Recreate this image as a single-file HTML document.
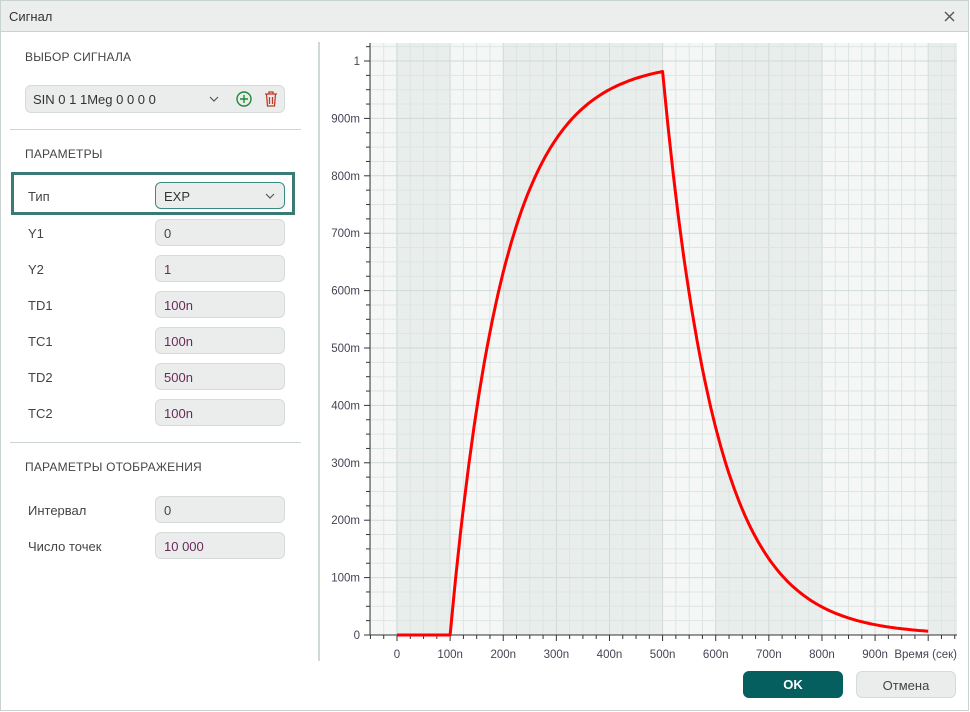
<!DOCTYPE html>
<html><head><meta charset="utf-8"><style>
*{box-sizing:border-box;margin:0;padding:0}
body{width:970px;height:712px;background:#fff;font-family:"Liberation Sans","DejaVu Sans",sans-serif;font-size:13px;color:#333;position:relative;overflow:hidden}
.win{position:absolute;left:0;top:0;width:969px;height:711px;border:1px solid #c8d2d0}
.title{position:absolute;left:1px;top:1px;width:967px;height:31px;background:#eceeed;border-bottom:1px solid #c8d2d0}
.title span{position:absolute;left:8px;top:8px;font-size:13px;color:#333}
.abs{position:absolute}
.h{position:absolute;left:25px;font-size:12px;color:#444;letter-spacing:.2px}
.lbl{position:absolute;left:28px;font-size:13px;color:#444}
.fld{position:absolute;left:155px;width:130px;height:27px;background:#ebedec;border:1px solid #d4dbd9;border-radius:6px;padding:6px 8px;font-size:13px;color:#6a2a5a}
.hr{position:absolute;left:10px;width:291px;height:1px;background:#cdd6d4}
.btn{position:absolute;top:671px;height:27px;width:100px;border-radius:6px;text-align:center;line-height:27px;font-size:13px}
</style></head><body>
<div class="win"></div>
<div class="title"><span>Сигнал</span>
<svg class="abs" style="left:943px;top:10px" width="12" height="12"><path d="M1 1L10 10M10 1L1 10" stroke="#555" stroke-width="1.4"/></svg></div>

<div class="h" style="top:50px">ВЫБОР СИГНАЛА</div>
<div class="abs" style="left:25px;top:85px;width:260px;height:28px;background:#ebedec;border:1px solid #d4dbd9;border-radius:6px"></div>
<div class="abs" style="left:33px;top:92px;font-size:13px;color:#333">SIN 0 1 1Meg 0 0 0 0</div>
<svg class="abs" style="left:209px;top:95px" width="10" height="8"><path d="M1 2L5 6L9 2" stroke="#555" fill="none" stroke-width="1.2"/></svg>
<svg class="abs" style="left:235px;top:90px" width="18" height="18"><circle cx="9" cy="9" r="7" stroke="#1f8a35" fill="none" stroke-width="1.4"/><path d="M9 5V13M5 9H13" stroke="#1f8a35" stroke-width="1.4"/></svg>
<svg class="abs" style="left:263px;top:90px" width="16" height="18"><path d="M2 4H14M6 4V2H10V4M3.5 4L4.5 16H11.5L12.5 4M6.5 7V14M9.5 7V14" stroke="#c0392b" fill="none" stroke-width="1.3"/></svg>
<div class="hr" style="top:129px"></div>
<div class="h" style="top:147px">ПАРАМЕТРЫ</div>
<div class="abs" style="left:11px;top:172px;width:284px;height:43px;border:3px solid #3a7a76"></div>
<div class="lbl" style="top:189px">Тип</div>
<div class="fld" style="top:182px;border-color:#3a8a84;color:#333;background:#ebedec">EXP</div>
<svg class="abs" style="left:265px;top:192px" width="10" height="8"><path d="M1 2L5 6L9 2" stroke="#555" fill="none" stroke-width="1.2"/></svg>
<div class="lbl" style="top:226px">Y1</div><div class="fld" style="top:219px;color:#444">0</div>
<div class="lbl" style="top:262px">Y2</div><div class="fld" style="top:255px">1</div>
<div class="lbl" style="top:298px">TD1</div><div class="fld" style="top:291px">100n</div>
<div class="lbl" style="top:334px">TC1</div><div class="fld" style="top:327px">100n</div>
<div class="lbl" style="top:370px">TD2</div><div class="fld" style="top:363px">500n</div>
<div class="lbl" style="top:406px">TC2</div><div class="fld" style="top:399px">100n</div>
<div class="hr" style="top:442px"></div>
<div class="h" style="top:460px">ПАРАМЕТРЫ ОТОБРАЖЕНИЯ</div>
<div class="lbl" style="top:503px">Интервал</div><div class="fld" style="top:496px;color:#444">0</div>
<div class="lbl" style="top:539px">Число точек</div><div class="fld" style="top:532px">10 000</div>
<div class="abs" style="left:318px;top:42px;width:2px;height:619px;background:#cfd9d7"></div>

<svg id="plot" class="abs" style="left:0;top:0" width="970" height="712"></svg>

<div class="btn" style="left:743px;background:#055f5f;color:#fff;font-weight:bold">OK</div>
<div class="btn" style="left:856px;background:#ebedec;border:1px solid #d4dbd9;color:#444">Отмена</div>
<script>
var s='',L=370,R=957,T=43,B=635;
function X(t){return 397+t*0.5312}function Y(v){return 635-v*574}
var bands=[[370,396,'#f5f7f6'],[396,450,'#e9eeed'],[450,503,'#f5f7f6'],[503,662,'#e9eeed'],[662,716,'#f5f7f6'],[716,822,'#e9eeed'],[822,929,'#f5f7f6'],[929,957,'#e9eeed']];
bands.forEach(function(b){s+='<rect x="'+b[0]+'" y="'+T+'" width="'+(b[1]-b[0])+'" height="'+(B-T)+'" fill="'+b[2]+'"/>';});
for(var t=-50;t<=1050;t+=25){var x=X(t);if(x<L||x>R)continue;var maj=(t%100==0);
s+='<line x1="'+x+'" y1="'+T+'" x2="'+x+'" y2="'+B+'" stroke="'+(maj?'#cfdad8':'#dde5e3')+'" stroke-width="1"/>';
s+='<line x1="'+x+'" y1="'+B+'" x2="'+x+'" y2="'+(B+(maj?6:4))+'" stroke="#333"/>';
if(maj&&t>=0&&t<=900)s+='<text x="'+x+'" y="658" text-anchor="middle" font-size="11.5" fill="#445">'+(t==0?'0':t+'n')+'</text>';}
for(var v=0;v<=1025;v+=25){var y=Y(v/1000);if(y<T)continue;var maj=(v%100==0);
s+='<line x1="'+L+'" y1="'+y+'" x2="'+R+'" y2="'+y+'" stroke="'+(maj?'#cfdad8':'#dde5e3')+'"/>';
s+='<line x1="'+(L-(maj?6:4))+'" y1="'+y+'" x2="'+L+'" y2="'+y+'" stroke="#333"/>';
if(maj)s+='<text x="'+(L-10)+'" y="'+(y+4)+'" text-anchor="end" font-size="11.5" fill="#445">'+(v==0?'0':v==1000?'1':v+'m')+'</text>';}
s+='<line x1="'+L+'" y1="'+T+'" x2="'+L+'" y2="'+B+'" stroke="#333"/><line x1="'+L+'" y1="'+B+'" x2="'+R+'" y2="'+B+'" stroke="#333"/>';
s+='<text x="957" y="658" text-anchor="end" font-size="11.5" fill="#445">Время (сек)</text>';
var p='M'+X(0)+' '+Y(0)+' L'+X(100)+' '+Y(0);
for(var t=100;t<=1000;t+=5){var v;if(t<=500)v=1-Math.exp(-(t-100)/100);else v=(1-Math.exp(-4))*Math.exp(-(t-500)/100);p+=' L'+X(t).toFixed(1)+' '+Y(v).toFixed(1);}
s+='<path d="'+p+'" stroke="#f00" stroke-width="3" fill="none" stroke-linejoin="round"/>';
document.getElementById('plot').innerHTML=s;
</script>
</body></html>
